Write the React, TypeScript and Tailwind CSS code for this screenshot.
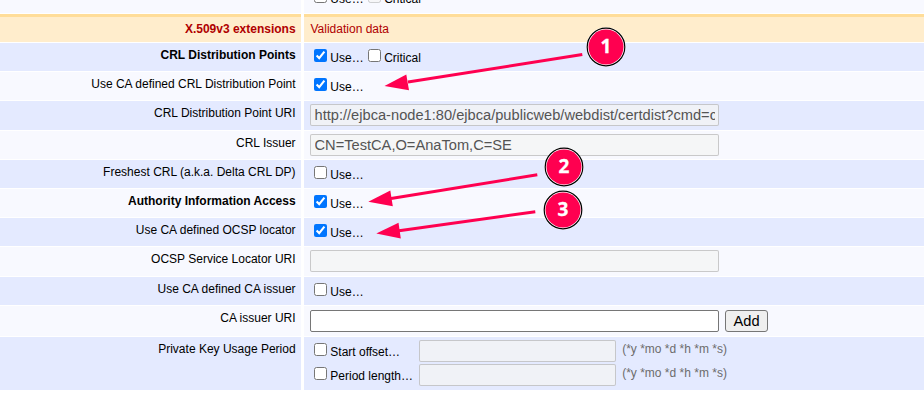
import type { ReactNode } from 'react';

type Tone = 'blue' | 'light' | 'head';

const tones: Record<Tone, string> = {
  blue: 'bg-[#e4eaff]',
  light: 'bg-[#f8f9ff]',
  head: 'bg-[#ffedcc] border-t-[3px] border-[#ffdd99] text-[#b00000]',
};

function Row({ label, height, tone, bold, children }: {
  label: string; height: string; tone: Tone; bold?: boolean; children?: ReactNode;
}) {
  return (
    <div className={`flex gap-[3px] ${height}`}>
      <div className={`w-[301px] shrink-0 pt-[5px] pr-[5.4px] text-right ${bold ? 'font-bold' : ''} ${tones[tone]}`}>
        {label}
      </div>
      <div className={`min-w-0 flex-1 pl-[6px] ${tones[tone]}`}>{children}</div>
    </div>
  );
}

function Check({ text, checked, disabled }: { text: string; checked?: boolean; disabled?: boolean }) {
  return (
    <label className="flex items-start">
      <input type="checkbox" defaultChecked={checked} disabled={disabled} className="m-0 mr-[3.3px] block size-[13px] shrink-0" />
      <span className="mt-[2px] block">{text}</span>
    </label>
  );
}

function Checks({ children }: { children: ReactNode }) {
  return <div className="flex gap-[4.2px] pt-[6px] pl-[4px]">{children}</div>;
}

function Field({ value, width, enabled }: { value?: string; width: string; enabled?: boolean }) {
  return (
    <input
      type="text"
      defaultValue={value}
      disabled={!enabled}
      className={`block h-[22px] shrink-0 rounded-[2px] border px-[3.5px] py-0 text-[14.65px] leading-[20px] ${width} ${
        enabled ? 'border-[#767676] bg-white text-black' : 'border-[#767676]/35 bg-[#f4f4f4]/75 text-[#545454]'
      }`}
    />
  );
}

function Period({ text }: { text: string }) {
  return (
    <div className="flex h-[24px] items-start">
      <div className="w-[109px] shrink-0 pt-[3px] pl-[4px]">
        <Check text={text} />
      </div>
      <Field width="w-[197px]" />
      <span className="ml-[6.2px] mt-[2px] text-[#6c6c6c]">(*y *mo *d *h *m *s)</span>
    </div>
  );
}

const marks = [
  { n: '1', cx: 606, cy: 47, line: [408, 82, 582.3, 54.5], head: '384.5,86 406.3,74.6 409,90.2' },
  { n: '2', cx: 564, cy: 167, line: [391, 198.4, 537.3, 174.8], head: '368.3,201.8 390.3,190.5 392.8,206.2' },
  { n: '3', cx: 563, cy: 210, line: [399, 230.7, 535.3, 211.8], head: '376.3,233.5 398.5,222.8 400.8,238.5' },
];

function Annotations() {
  return (
    <svg className="pointer-events-none absolute top-0 left-0" width="924" height="402" viewBox="0 0 924 402">
      {marks.map((m) => (
        <g key={m.n}>
          <line x1={m.line[0]} y1={m.line[1]} x2={m.line[2]} y2={m.line[3]} stroke="#ff0050" strokeWidth="3" />
          <polygon points={m.head} fill="#ff0050" />
          <circle cx={m.cx} cy={m.cy} r="19.8" fill="#fff" />
          <circle cx={m.cx} cy={m.cy} r="18.8" fill="#fff" stroke="#000" strokeWidth="1.2" />
          <circle cx={m.cx} cy={m.cy} r="17.5" fill="#ff0050" />
          <text x={m.cx} y={m.cy + 6.3} textAnchor="middle" fill="#fff" stroke="#fff" strokeWidth="0.3" className="font-['Noto_Sans','Open_Sans',sans-serif] text-[19px] font-bold">
            {m.n}
          </text>
        </g>
      ))}
    </svg>
  );
}

export default function App() {
  return (
    <div className="relative h-[402px] w-[924px] overflow-hidden bg-white font-['Liberation_Sans',Arial,sans-serif] text-[12px] leading-[14px] text-black">
      <div className="-mt-[16px] flex flex-col gap-px">
        <Row label="" height="h-[29px]" tone="light">
          <Checks>
            <Check text="Use…" />
            <Check text="Critical" disabled />
          </Checks>
        </Row>
        <Row label="X.509v3 extensions" height="h-[28px]" tone="head" bold>
          <div className="pt-[5px] pl-[0.5px]">Validation data</div>
        </Row>
        <Row label="CRL Distribution Points" height="h-[28px]" tone="blue" bold>
          <Checks>
            <Check text="Use…" checked />
            <Check text="Critical" />
          </Checks>
        </Row>
        <Row label="Use CA defined CRL Distribution Point" height="h-[28px]" tone="light">
          <Checks><Check text="Use…" checked /></Checks>
        </Row>
        <Row label="CRL Distribution Point URI" height="h-[29px]" tone="blue">
          <div className="pt-[3px]">
            <Field width="w-[409px]" value="http://ejbca-node1:80/ejbca/publicweb/webdist/certdist?cmd=crl&issuer=CN=TestCA" />
          </div>
        </Row>
        <Row label="CRL Issuer" height="h-[28px]" tone="light">
          <div className="pt-[3px]"><Field width="w-[409px]" value="CN=TestCA,O=AnaTom,C=SE" /></div>
        </Row>
        <Row label="Freshest CRL (a.k.a. Delta CRL DP)" height="h-[28px]" tone="blue">
          <Checks><Check text="Use…" /></Checks>
        </Row>
        <Row label="Authority Information Access" height="h-[28px]" tone="light" bold>
          <Checks><Check text="Use…" checked /></Checks>
        </Row>
        <Row label="Use CA defined OCSP locator" height="h-[28px]" tone="blue">
          <Checks><Check text="Use…" checked /></Checks>
        </Row>
        <Row label="OCSP Service Locator URI" height="h-[29px]" tone="light">
          <div className="pt-[3px]"><Field width="w-[409px]" /></div>
        </Row>
        <Row label="Use CA defined CA issuer" height="h-[28px]" tone="blue">
          <Checks><Check text="Use…" /></Checks>
        </Row>
        <Row label="CA issuer URI" height="h-[30px]" tone="light">
          <div className="flex gap-[6px] pt-[4px]">
            <Field width="w-[409px]" enabled />
            <button className="h-[22px] w-[43px] rounded-[3px] border border-[#767676] bg-[#efefef] text-[14.65px] leading-[20px] text-black">Add</button>
          </div>
        </Row>
        <Row label="Private Key Usage Period" height="h-[53px]" tone="blue">
          <div className="pt-[3px]">
            <Period text="Start offset…" />
            <Period text="Period length…" />
          </div>
        </Row>
      </div>
      <Annotations />
    </div>
  );
}
